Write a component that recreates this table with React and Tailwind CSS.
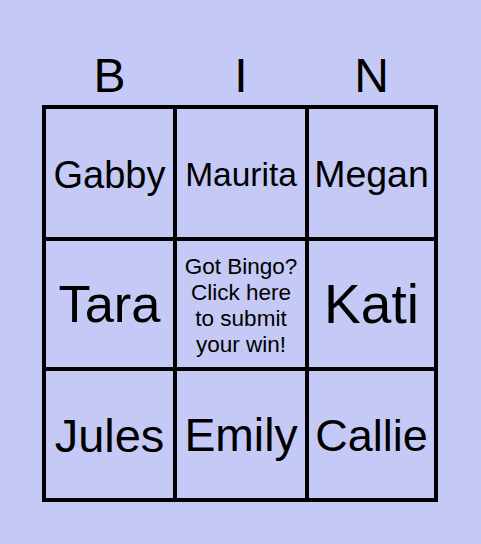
export default function App() {
  const cells = [
    { t: "Gabby", c: "text-[38px] pt-[3px]" },
    { t: "Maurita", c: "text-[33.5px] pt-[3px]" },
    { t: "Megan", c: "text-[37.5px] pt-[3px]" },
    { t: "Tara", c: "text-[52.5px] pt-[1px]" },
    { t: null },
    { t: "Kati", c: "text-[55px] pt-[1px]" },
    { t: "Jules", c: "text-[47px] pt-[1px]" },
    { t: "Emily", c: "text-[46.3px] pt-[1px]" },
    { t: "Callie", c: "text-[45px] pt-[1px]" },
  ];
  return (
    <div
      className="w-full min-h-screen bg-[#c5c9f6] text-black"
      style={{ fontFamily: '"Liberation Sans", Arial, sans-serif' }}
    >
      <div className="w-[396px] ml-[42px] pt-[48px]">
        <div className="grid grid-cols-[127px_128px_125px] px-[4px] gap-[4px] text-[48px] leading-[55px] text-center">
          <div>B</div>
          <div>I</div>
          <div>N</div>
        </div>
        <div className="mt-[2px] bg-black p-[4px] grid grid-cols-[127px_128px_125px] grid-rows-[128px_126px_127px] gap-[4px]">
          {cells.map((cell, i) =>
            cell.t ? (
              <div
                key={i}
                className={`bg-[#c5c9f6] flex items-center justify-center whitespace-nowrap leading-none ${cell.c}`}
              >
                {cell.t}
              </div>
            ) : (
              <div
                key={i}
                className="bg-[#c5c9f6] flex items-center justify-center text-center text-[22.5px] leading-[26px] pt-[4px]"
              >
                <div>
                  Got Bingo?
                  <br />
                  Click here
                  <br />
                  to submit
                  <br />
                  your win!
                </div>
              </div>
            )
          )}
        </div>
      </div>
    </div>
  );
}
